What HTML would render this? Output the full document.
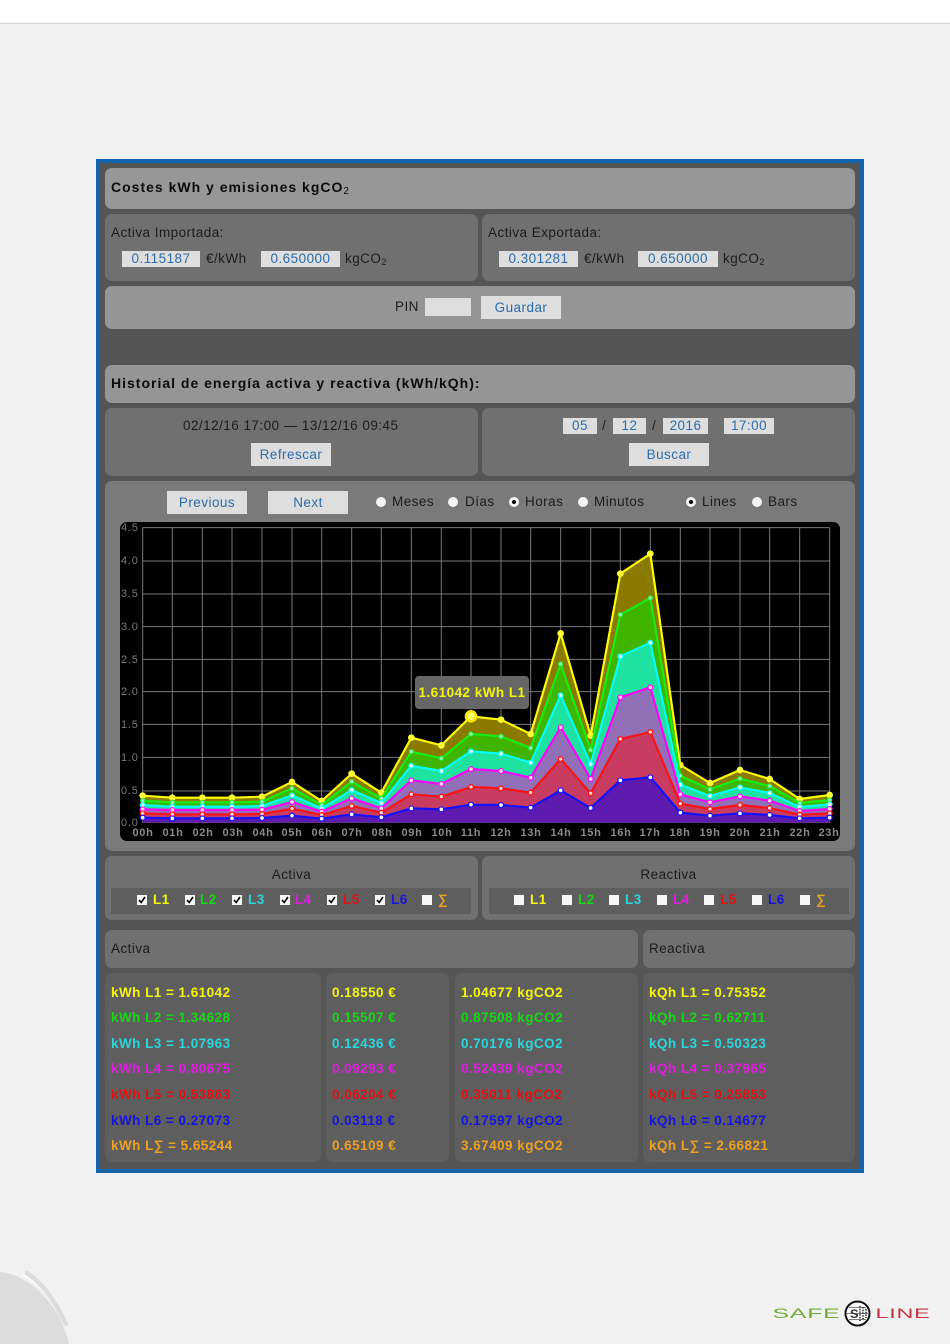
<!DOCTYPE html>
<html lang="es"><head><meta charset="utf-8"><title>Costes kWh</title>
<style>
*{box-sizing:border-box}
html,body{margin:0;padding:0;width:950px;height:1344px;overflow:hidden}
body{position:relative;background:#f1f1f1;font-family:"Liberation Sans",Arial,sans-serif;font-size:13.5px;letter-spacing:.46px;color:#1c1c1c}
.a{position:absolute}
.p{position:absolute;border-radius:7px}
.t{position:absolute;white-space:nowrap;line-height:16px;height:16px}
.h{font-weight:bold;font-size:14px;letter-spacing:1px;color:#0c0c0c}
.h sub{font-size:10px;font-weight:normal}
.i,.b{position:absolute;background:#dedede;color:#2b6cab;text-align:center;white-space:nowrap}
.i{line-height:16px;height:16px}
.b{line-height:23px;height:23px;width:80px}
.r{position:absolute;width:10px;height:10px;border-radius:50%;background:#f4f4f4;top:497px}
.r.on:after{content:"";position:absolute;left:3px;top:3px;width:4px;height:4px;border-radius:50%;background:#000}
.c{position:absolute;width:10px;height:10px;background:#f6f6f6;top:895px}
.c svg{display:block}
.l{position:absolute;top:892px;line-height:16px;height:16px;font-weight:bold;white-space:nowrap}
.d{position:absolute;font-weight:bold;white-space:nowrap;line-height:16px;height:16px}
.y{color:#f5f50a}.g{color:#14d814}.n{color:#2ad6dc}.m{color:#e01ee0}.e{color:#e01212}.u{color:#1414e0}.o{color:#eea020}
sub{font-size:9px;line-height:0;vertical-align:-2px;letter-spacing:0}
.yl{position:absolute;left:121px;color:#7a7a7a;font-size:11px;font-weight:normal;line-height:12px;letter-spacing:.8px}
.xl{position:absolute;top:827px;width:30px;text-align:center;color:#8a8a8a;font-size:11px;font-weight:bold;line-height:12px;letter-spacing:.7px}
</style></head><body>
<div class="a" style="left:0;top:0;width:950px;height:23px;background:#fff;border-bottom:1px solid #f0f0f0"></div>
<div class="a" style="left:0;top:23px;width:950px;height:1px;background:#d6d6d6"></div>

<svg class="a" style="left:0;top:1260px" width="100" height="84" viewBox="0 1260 100 84">
<path d="M0 1272C22 1273 50 1295 63 1325Q67 1335 69 1344L0 1344Z" fill="#dcdcdc"/>
<path d="M23 1275C42 1285 55 1303 65 1325" fill="none" stroke="#fff" stroke-width="1.500"/>
<path d="M27 1273Q49 1288 66 1324" fill="none" stroke="#dcdcdc" stroke-width="4.500" stroke-linecap="round"/>
</svg>

<svg class="a" style="left:760px;top:1295px" width="180" height="36" viewBox="760 1295 180 36">
<text x="772.500" y="1318" font-family="Liberation Sans" font-size="14" fill="#6fae35" textLength="68" lengthAdjust="spacingAndGlyphs">SAFE</text>
<circle cx="857.500" cy="1313.500" r="12" fill="#fff" stroke="#111" stroke-width="2"/>
<path d="M847 1313.500H868M849 1307.500H866M849 1319.500H866" stroke="#555" stroke-width=".8" fill="none"/>
<text x="850" y="1318" font-family="Liberation Sans" font-size="12" font-weight="bold" fill="#333" textLength="9" lengthAdjust="spacingAndGlyphs">S</text>
<path d="M860 1306v15M863 1307v13M866 1309v9" stroke="#222" stroke-width="1.500" stroke-dasharray="1.500 1.200" fill="none"/>
<text x="875.500" y="1318" font-family="Liberation Sans" font-size="14" fill="#c9333f" textLength="55" lengthAdjust="spacingAndGlyphs">LINE</text>
</svg>

<div class="a" style="left:96px;top:159px;width:768px;height:1014px;background:#555;border:4px solid #1565ad"></div>

<div class="p" style="left:105px;top:168px;width:750px;height:41px;background:#979797"></div>
<div class="t h" style="left:111px;top:179px">Costes kWh y emisiones kgCO<sub>2</sub></div>

<div class="p" style="left:105px;top:214px;width:373px;height:67px;background:#707070"></div>
<div class="p" style="left:482px;top:214px;width:373px;height:67px;background:#707070"></div>
<div class="t" style="left:111px;top:225px">Activa Importada:</div>
<div class="i" style="left:122px;top:251px;width:78px">0.115187</div>
<div class="t" style="left:206px;top:251px">€/kWh</div>
<div class="i" style="left:261px;top:251px;width:79px">0.650000</div>
<div class="t" style="left:345px;top:251px">kgCO<sub>2</sub></div>
<div class="t" style="left:488px;top:225px">Activa Exportada:</div>
<div class="i" style="left:499px;top:251px;width:79px">0.301281</div>
<div class="t" style="left:584px;top:251px">€/kWh</div>
<div class="i" style="left:638px;top:251px;width:80px">0.650000</div>
<div class="t" style="left:723px;top:251px">kgCO<sub>2</sub></div>

<div class="p" style="left:105px;top:286px;width:750px;height:43px;background:#959595"></div>
<div class="t" style="left:395px;top:299px">PIN</div>
<div class="i" style="left:425px;top:298px;width:46px;height:18px"></div>
<div class="b" style="left:481px;top:296px">Guardar</div>

<div class="p" style="left:105px;top:365px;width:750px;height:38px;background:#959595"></div>
<div class="t h" style="left:111px;top:375px">Historial de energía activa y reactiva (kWh/kQh):</div>

<div class="p" style="left:105px;top:408px;width:373px;height:68px;background:#707070"></div>
<div class="p" style="left:482px;top:408px;width:373px;height:68px;background:#707070"></div>
<div class="t" style="left:183px;top:418px">02/12/16 17:00 — 13/12/16 09:45</div>
<div class="b" style="left:251px;top:443px">Refrescar</div>
<div class="i" style="left:563px;top:418px;width:34px">05</div>
<div class="t" style="left:602px;top:418px">/</div>
<div class="i" style="left:613px;top:418px;width:33px">12</div>
<div class="t" style="left:652px;top:418px">/</div>
<div class="i" style="left:663px;top:418px;width:45px">2016</div>
<div class="i" style="left:724px;top:418px;width:50px">17:00</div>
<div class="b" style="left:629px;top:443px">Buscar</div>

<div class="p" style="left:105px;top:481px;width:750px;height:370px;background:#7a7a7a"></div>
<div class="b" style="left:167px;top:491px">Previous</div>
<div class="b" style="left:268px;top:491px">Next</div>
<div class="r" style="left:376px"></div><div class="t" style="left:392px;top:494px">Meses</div>
<div class="r" style="left:448px"></div><div class="t" style="left:465px;top:494px">Días</div>
<div class="r on" style="left:509px"></div><div class="t" style="left:525px;top:494px">Horas</div>
<div class="r" style="left:578px"></div><div class="t" style="left:594px;top:494px">Minutos</div>
<div class="r on" style="left:686px"></div><div class="t" style="left:702px;top:494px">Lines</div>
<div class="r" style="left:752px"></div><div class="t" style="left:768px;top:494px">Bars</div>

<div class="a" style="left:120px;top:522px;width:720px;height:319px;background:#000;border-radius:7px"></div>
<svg class="a" style="left:0;top:515px" width="950" height="330" viewBox="0 0 950 330">
<defs>
<marker id="m1" markerUnits="userSpaceOnUse" markerWidth="24" markerHeight="24" refX="12" refY="12" viewBox="0 0 24 24"><circle cx="12" cy="12" r="10" fill="#ff3"/></marker>
<marker id="m2" markerUnits="userSpaceOnUse" markerWidth="24" markerHeight="24" refX="12" refY="12" viewBox="0 0 24 24"><circle cx="12" cy="12" r="8" fill="#2fe82f"/><circle cx="12" cy="12" r="4.500" fill="#9fd"/></marker>
<marker id="m3" markerUnits="userSpaceOnUse" markerWidth="24" markerHeight="24" refX="12" refY="12" viewBox="0 0 24 24"><circle cx="12" cy="12" r="9" fill="#0ff"/><circle cx="12" cy="12" r="5.500" fill="#dff"/></marker>
<marker id="m4" markerUnits="userSpaceOnUse" markerWidth="24" markerHeight="24" refX="12" refY="12" viewBox="0 0 24 24"><circle cx="12" cy="12" r="9" fill="#f0f"/><circle cx="12" cy="12" r="5.500" fill="#fde"/></marker>
<marker id="m5" markerUnits="userSpaceOnUse" markerWidth="24" markerHeight="24" refX="12" refY="12" viewBox="0 0 24 24"><circle cx="12" cy="12" r="9" fill="#f11"/><circle cx="12" cy="12" r="5" fill="#fdd"/></marker>
<marker id="m6" markerUnits="userSpaceOnUse" markerWidth="24" markerHeight="24" refX="12" refY="12" viewBox="0 0 24 24"><circle cx="12" cy="12" r="9" fill="#11f"/><circle cx="12" cy="12" r="5.500" fill="#fff"/></marker>
</defs>
<g transform="scale(.33333)">
<path fill="none" stroke="#787878" stroke-width="3" d="M428 38H2489M428 138H2489M428 237H2489M428 335H2489M428 433H2489M428 530H2489M428 628H2489M428 727H2489M428 828H2489M428 38V923M517 38V923M607 38V923M696 38V923M786 38V923M876 38V923M965 38V923M1055 38V923M1144 38V923M1234 38V923M1324 38V923M1413 38V923M1503 38V923M1592 38V923M1682 38V923M1772 38V923M1861 38V923M1951 38V923M2041 38V923M2130 38V923M2220 38V923M2309 38V923M2399 38V923M2489 38V923"/>
<polygon fill="#8a7a00" points="428,923 428,842 517,848 607,848 696,848 786,845 876,801 965,858 1055,776 1144,833 1234,668 1324,691 1413,604 1503,614 1592,657 1682,355 1772,662 1861,176 1951,116 2041,750 2130,804 2220,765 2309,792 2399,852 2489,840 2489,923"/>
<polygon fill="#3fb500" points="428,923 428,857 517,862 607,862 696,862 786,860 876,820 965,870 1055,800 1144,850 1234,710 1324,730 1413,657 1503,664 1592,699 1682,447 1772,705 1861,299 1951,249 2041,782 2130,823 2220,791 2309,813 2399,864 2489,855 2489,923"/>
<polygon fill="#1ee2a0" points="428,923 428,870 517,875 607,875 696,875 786,873 876,841 965,880 1055,825 1144,864 1234,752 1324,768 1413,709 1503,716 1592,743 1682,541 1772,747 1861,424 1951,383 2041,809 2130,843 2220,817 2309,834 2399,876 2489,868 2489,923"/>
<polygon fill="#9170b8" points="428,923 428,883 517,885 607,885 696,885 786,884 876,861 965,890 1055,850 1144,880 1234,796 1324,807 1413,762 1503,768 1592,788 1682,637 1772,792 1861,547 1951,517 2041,838 2130,862 2220,844 2309,857 2399,888 2489,882 2489,923"/>
<polygon fill="#c83c62" points="428,923 428,895 517,898 607,898 696,898 786,897 876,881 965,900 1055,873 1144,893 1234,838 1324,845 1413,816 1503,820 1592,833 1682,732 1772,835 1861,672 1951,651 2041,866 2130,882 2220,870 2309,879 2399,899 2489,895 2489,923"/>
<polygon fill="#5f1ab0" points="428,923 428,908 517,910 607,910 696,910 786,909 876,902 965,911 1055,898 1144,907 1234,880 1324,883 1413,869 1503,870 1592,878 1682,826 1772,879 1861,796 1951,787 2041,893 2130,902 2220,895 2309,900 2399,910 2489,908 2489,923"/>
<g fill="none" stroke-width="6.500" stroke-linejoin="round">
<polyline stroke="#ff0" marker-start="url(#m1)" marker-mid="url(#m1)" marker-end="url(#m1)" points="428,842 517,848 607,848 696,848 786,845 876,801 965,858 1055,776 1144,833 1234,668 1324,691 1413,604 1503,614 1592,657 1682,355 1772,662 1861,176 1951,116 2041,750 2130,804 2220,765 2309,792 2399,852 2489,840"/>
<polyline stroke="#14ee14" marker-start="url(#m2)" marker-mid="url(#m2)" marker-end="url(#m2)" points="428,857 517,862 607,862 696,862 786,860 876,820 965,870 1055,800 1144,850 1234,710 1324,730 1413,657 1503,664 1592,699 1682,447 1772,705 1861,299 1951,249 2041,782 2130,823 2220,791 2309,813 2399,864 2489,855"/>
<polyline stroke="#0ff" marker-start="url(#m3)" marker-mid="url(#m3)" marker-end="url(#m3)" points="428,870 517,875 607,875 696,875 786,873 876,841 965,880 1055,825 1144,864 1234,752 1324,768 1413,709 1503,716 1592,743 1682,541 1772,747 1861,424 1951,383 2041,809 2130,843 2220,817 2309,834 2399,876 2489,868"/>
<polyline stroke="#f0f" marker-start="url(#m4)" marker-mid="url(#m4)" marker-end="url(#m4)" points="428,883 517,885 607,885 696,885 786,884 876,861 965,890 1055,850 1144,880 1234,796 1324,807 1413,762 1503,768 1592,788 1682,637 1772,792 1861,547 1951,517 2041,838 2130,862 2220,844 2309,857 2399,888 2489,882"/>
<polyline stroke="#f11" marker-start="url(#m5)" marker-mid="url(#m5)" marker-end="url(#m5)" points="428,895 517,898 607,898 696,898 786,897 876,881 965,900 1055,873 1144,893 1234,838 1324,845 1413,816 1503,820 1592,833 1682,732 1772,835 1861,672 1951,651 2041,866 2130,882 2220,870 2309,879 2399,899 2489,895"/>
<polyline stroke="#11f" marker-start="url(#m6)" marker-mid="url(#m6)" marker-end="url(#m6)" points="428,908 517,910 607,910 696,910 786,909 876,902 965,911 1055,898 1144,907 1234,880 1324,883 1413,869 1503,870 1592,878 1682,826 1772,879 1861,796 1951,787 2041,893 2130,902 2220,895 2309,900 2399,910 2489,908"/>
</g>
<circle cx="1413" cy="604" r="19" fill="#ffe600"/><circle cx="1413" cy="604" r="11" fill="#ff6"/>
</g>
</svg>
<div class="yl" style="top:522px">4.5</div><div class="yl" style="top:555px">4.0</div><div class="yl" style="top:588px">3.5</div><div class="yl" style="top:621px">3.0</div><div class="yl" style="top:654px">2.5</div><div class="yl" style="top:686px">2.0</div><div class="yl" style="top:719px">1.5</div><div class="yl" style="top:752px">1.0</div><div class="yl" style="top:785px">0.5</div><div class="yl" style="top:817px">0.0</div>
<div class="xl" style="left:128px">00h</div><div class="xl" style="left:158px">01h</div><div class="xl" style="left:188px">02h</div><div class="xl" style="left:218px">03h</div><div class="xl" style="left:248px">04h</div><div class="xl" style="left:277px">05h</div><div class="xl" style="left:307px">06h</div><div class="xl" style="left:337px">07h</div><div class="xl" style="left:367px">08h</div><div class="xl" style="left:397px">09h</div><div class="xl" style="left:427px">10h</div><div class="xl" style="left:456px">11h</div><div class="xl" style="left:486px">12h</div><div class="xl" style="left:516px">13h</div><div class="xl" style="left:546px">14h</div><div class="xl" style="left:576px">15h</div><div class="xl" style="left:606px">16h</div><div class="xl" style="left:635px">17h</div><div class="xl" style="left:665px">18h</div><div class="xl" style="left:695px">19h</div><div class="xl" style="left:725px">20h</div><div class="xl" style="left:755px">21h</div><div class="xl" style="left:785px">22h</div><div class="xl" style="left:814px">23h</div>
<div class="a" style="left:415px;top:676px;width:114px;height:33px;background:#666;border-radius:4px;color:#f5f50a;font-weight:bold;line-height:33px;text-align:center;white-space:nowrap">1.61042 kWh L1</div>

<div class="p" style="left:105px;top:856px;width:373px;height:64px;background:#707070"></div>
<div class="p" style="left:482px;top:856px;width:373px;height:64px;background:#707070"></div>
<div class="a" style="left:111px;top:888px;width:360px;height:26px;background:#5e5e5e"></div>
<div class="a" style="left:489px;top:888px;width:360px;height:26px;background:#5e5e5e"></div>
<div class="t" style="left:105px;top:867px;width:373px;text-align:center">Activa</div>
<div class="t" style="left:482px;top:867px;width:373px;text-align:center">Reactiva</div>

<div class="c" style="left:137px"><svg width="10" height="10" viewBox="0 0 10 10"><path d="M2 5l2.200 2.500L8 2" fill="none" stroke="#000" stroke-width="1.600"/></svg></div><div class="l y" style="left:153px">L1</div>
<div class="c" style="left:185px"><svg width="10" height="10" viewBox="0 0 10 10"><path d="M2 5l2.200 2.500L8 2" fill="none" stroke="#000" stroke-width="1.600"/></svg></div><div class="l g" style="left:200px">L2</div>
<div class="c" style="left:232px"><svg width="10" height="10" viewBox="0 0 10 10"><path d="M2 5l2.200 2.500L8 2" fill="none" stroke="#000" stroke-width="1.600"/></svg></div><div class="l n" style="left:248px">L3</div>
<div class="c" style="left:280px"><svg width="10" height="10" viewBox="0 0 10 10"><path d="M2 5l2.200 2.500L8 2" fill="none" stroke="#000" stroke-width="1.600"/></svg></div><div class="l m" style="left:295px">L4</div>
<div class="c" style="left:327px"><svg width="10" height="10" viewBox="0 0 10 10"><path d="M2 5l2.200 2.500L8 2" fill="none" stroke="#000" stroke-width="1.600"/></svg></div><div class="l e" style="left:343px">L5</div>
<div class="c" style="left:375px"><svg width="10" height="10" viewBox="0 0 10 10"><path d="M2 5l2.200 2.500L8 2" fill="none" stroke="#000" stroke-width="1.600"/></svg></div><div class="l u" style="left:391px">L6</div>
<div class="c" style="left:422px"></div><div class="l o" style="left:438px">∑</div>

<div class="c" style="left:514px"></div><div class="l y" style="left:530px">L1</div>
<div class="c" style="left:562px"></div><div class="l g" style="left:578px">L2</div>
<div class="c" style="left:609px"></div><div class="l n" style="left:625px">L3</div>
<div class="c" style="left:657px"></div><div class="l m" style="left:673px">L4</div>
<div class="c" style="left:704px"></div><div class="l e" style="left:720px">L5</div>
<div class="c" style="left:752px"></div><div class="l u" style="left:768px">L6</div>
<div class="c" style="left:800px"></div><div class="l o" style="left:816px">∑</div>

<div class="p" style="left:105px;top:930px;width:533px;height:38px;background:#707070"></div>
<div class="p" style="left:643px;top:930px;width:212px;height:38px;background:#707070"></div>
<div class="t" style="left:111px;top:941px">Activa</div>
<div class="t" style="left:649px;top:941px">Reactiva</div>

<div class="p" style="left:105px;top:973px;width:216px;height:189px;background:#5e5e5e"></div>
<div class="p" style="left:326px;top:973px;width:123px;height:189px;background:#5e5e5e"></div>
<div class="p" style="left:455px;top:973px;width:183px;height:189px;background:#5e5e5e"></div>
<div class="p" style="left:643px;top:973px;width:212px;height:189px;background:#5e5e5e"></div>

<div class="d y" style="left:111px;top:985px">kWh L1 = 1.61042</div>
<div class="d g" style="left:111px;top:1010px">kWh L2 = 1.34628</div>
<div class="d n" style="left:111px;top:1036px">kWh L3 = 1.07963</div>
<div class="d m" style="left:111px;top:1061px">kWh L4 = 0.80675</div>
<div class="d e" style="left:111px;top:1087px">kWh L5 = 0.53863</div>
<div class="d u" style="left:111px;top:1113px">kWh L6 = 0.27073</div>
<div class="d o" style="left:111px;top:1138px">kWh L∑ = 5.65244</div>

<div class="d y" style="left:332px;top:985px">0.18550 €</div>
<div class="d g" style="left:332px;top:1010px">0.15507 €</div>
<div class="d n" style="left:332px;top:1036px">0.12436 €</div>
<div class="d m" style="left:332px;top:1061px">0.09293 €</div>
<div class="d e" style="left:332px;top:1087px">0.06204 €</div>
<div class="d u" style="left:332px;top:1113px">0.03118 €</div>
<div class="d o" style="left:332px;top:1138px">0.65109 €</div>

<div class="d y" style="left:461px;top:985px">1.04677 kgCO2</div>
<div class="d g" style="left:461px;top:1010px">0.87508 kgCO2</div>
<div class="d n" style="left:461px;top:1036px">0.70176 kgCO2</div>
<div class="d m" style="left:461px;top:1061px">0.52439 kgCO2</div>
<div class="d e" style="left:461px;top:1087px">0.35011 kgCO2</div>
<div class="d u" style="left:461px;top:1113px">0.17597 kgCO2</div>
<div class="d o" style="left:461px;top:1138px">3.67409 kgCO2</div>

<div class="d y" style="left:649px;top:985px">kQh L1 = 0.75352</div>
<div class="d g" style="left:649px;top:1010px">kQh L2 = 0.62711</div>
<div class="d n" style="left:649px;top:1036px">kQh L3 = 0.50323</div>
<div class="d m" style="left:649px;top:1061px">kQh L4 = 0.37965</div>
<div class="d e" style="left:649px;top:1087px">kQh L5 = 0.25853</div>
<div class="d u" style="left:649px;top:1113px">kQh L6 = 0.14677</div>
<div class="d o" style="left:649px;top:1138px">kQh L∑ = 2.66821</div>
</body></html>
